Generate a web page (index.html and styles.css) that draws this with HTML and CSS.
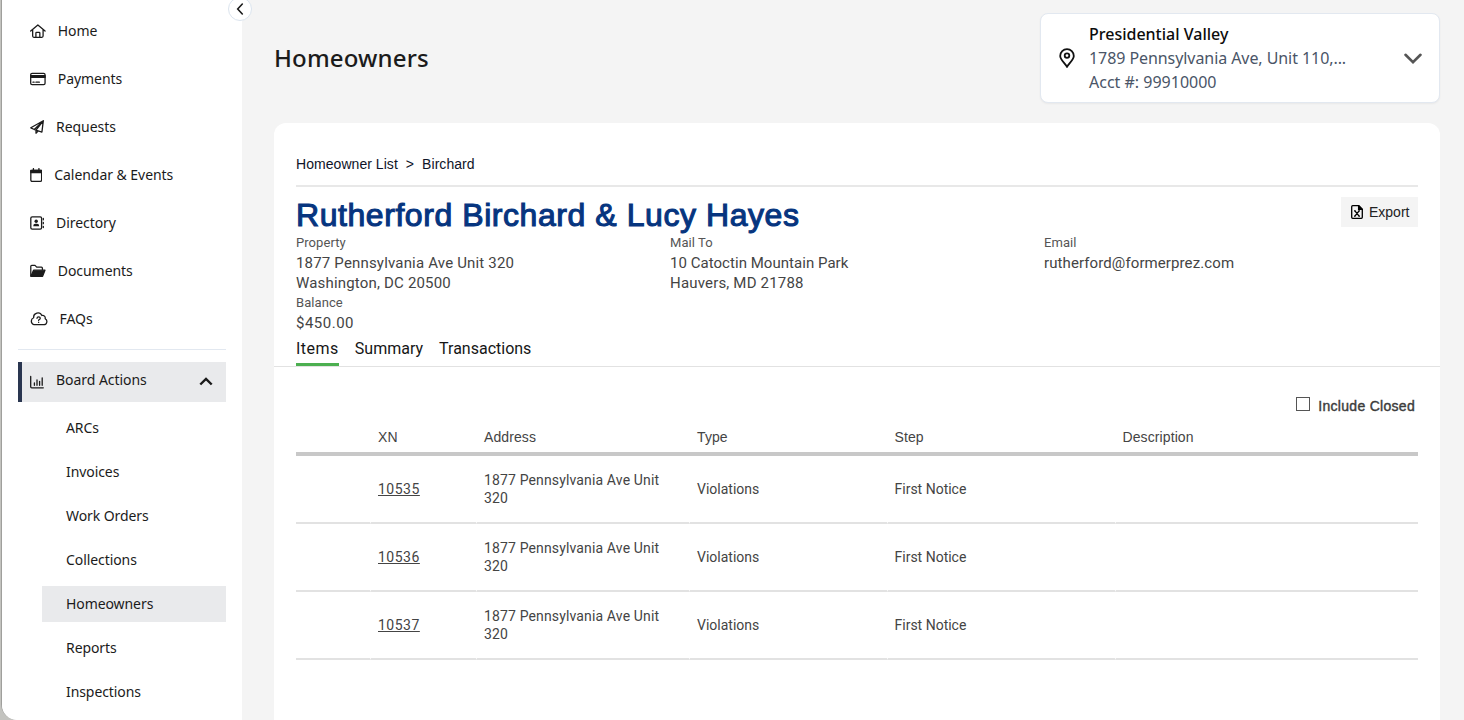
FILE: index.html
```html
<!DOCTYPE html>
<html lang="en">
<head>
    <meta charset="UTF-8">
    <meta name="viewport" content="width=device-width, initial-scale=1.0">
    <title>Homeowners</title>
    <link rel="stylesheet" href="styles.css">
</head>
<body>
    <div class="app">
        <aside class="sidebar">
            <nav class="main-nav">
                <a class="nav-item">
                    <svg class="icon w16" viewBox="0 0 16 14"><path d="M.7 7 8 .8 15.3 7M2.7 5.6v6.6q0 1.2 1.2 1.2h8.2q1.2 0 1.2-1.2V5.6M6 13.2V9q0-.7.7-.7h2.6q.7 0 .7.7v4.2"/></svg>
                    <span>Home</span>
                </a>
                <a class="nav-item">
                    <svg class="icon w16" viewBox="0 0 16 14"><rect x=".7" y="1.2" width="14.6" height="11.6" rx="1.4"/><path class="fill" d="M.7 3.600h14.6v1.800H.7z"/><path d="M3 10.2h1.2M6 10.2h3.500"/></svg>
                    <span>Payments</span>
                </a>
                <a class="nav-item">
                    <svg class="icon w14" viewBox="0 0 14 14"><path d="M13.3.8.8 7.8l3.5 1.7 7.6 2.6L13.3.8 4.3 9.5M13.3.8 6 10.1v3.1l2-2.2"/></svg>
                    <span>Requests</span>
                </a>
                <a class="nav-item">
                    <svg class="icon w12" viewBox="0 0 12 14"><rect x=".7" y="2.3" width="10.8" height="11" rx="1.2"/><path class="fill" d="M.7 2.3h10.8v2.2H.7z"/><path d="M3.3.6v2M8.8.6v2"/></svg>
                    <span>Calendar &amp; Events</span>
                </a>
                <a class="nav-item">
                    <svg class="icon w14" viewBox="0 0 14 14"><rect x=".8" y=".8" width="10.8" height="12.4" rx="1.4"/><g class="solid"><circle cx="6.2" cy="5.200" r="1.700"/><path d="M3.200 10.200q0-2.400 2.200-2.400h1.600q2.200 0 2.200 2.400z"/></g><path d="M13.300 2.500v1.300M13.300 6.400v1.300M13.300 10.300v1.300"/></svg>
                    <span>Directory</span>
                </a>
                <a class="nav-item">
                    <svg class="icon w16" viewBox="0 0 16 14"><path d="M.8 12V2.3q0-1 1-1h3.300l1.700 1.800h4.800q1 0 1 1v1.500"/><path class="fill" d="M3.600 6.200h11.600l-2.400 6.200H.9z"/></svg>
                    <span>Documents</span>
                </a>
                <a class="nav-item">
                    <svg class="icon w18" viewBox="0 0 18 14"><path d="M4.100 12.900h10a3.300 3.300 0 0 0 1.500-6.200 2.700 2.700 0 0 0-3.400-3.300 4.400 4.400 0 0 0-8.400 2.300A3.800 3.800 0 0 0 4.100 12.900z"/><path d="M7.200 6.300q.1-1.400 1.700-1.400 1.700 0 1.700 1.300 0 1-1.700 1.800v.5M8.900 10.300v.2"/></svg>
                    <span>FAQs</span>
                </a>
            </nav>

            <a class="board-toggle">
                <svg class="icon w14" viewBox="0 0 14 14"><path d="M.7 1.500v10.300q0 1 1 1h11.600M4.400 10.300V8M7 10.300V5M9.600 10.300V6.300M12.200 10.300V2.800"/></svg>
                <span class="board-label">Board Actions</span>
                <svg class="caret" viewBox="0 0 14 9"><path d="M1.300 7.500 7 2l5.700 5.500"/></svg>
            </a>
            <nav class="sub-nav">
                <a>ARCs</a>
                <a>Invoices</a>
                <a>Work Orders</a>
                <a>Collections</a>
                <a class="active">Homeowners</a>
                <a>Reports</a>
                <a>Inspections</a>
            </nav>
            <button class="collapse"><svg viewBox="0 0 8 12"><path d="M6.300 1 1.700 6l4.600 5"/></svg></button>
        </aside>

        <main class="content">
            <header class="topbar">
                <h1>Homeowners</h1>
                <div class="account">
                    <svg class="pin" viewBox="0 0 16 20"><path d="M8 18.800C6 15.400 1.200 11.500 1.200 7.900a6.800 6.800 0 0 1 13.600 0C14.800 11.500 10 15.400 8 18.800z"/><circle cx="8" cy="7.600" r="2.300"/></svg>
                    <div class="account-text">
                        <div class="account-name">Presidential Valley</div>
                        <div class="account-address">1789 Pennsylvania Ave, Unit 110,...</div>
                        <div>Acct #: 99910000</div>
                    </div>
                    <svg class="chevron" viewBox="0 0 18 11"><path d="M1.500 1.800 9 9.100l7.500-7.300"/></svg>
                </div>
            </header>

            <section class="card">
                <div class="breadcrumb"><span>Homeowner List</span><span>&gt;</span><span>Birchard</span></div>
                <div class="owner-head">
                    <h2>Rutherford Birchard &amp; Lucy Hayes</h2>
                    <button class="export">
                        <svg viewBox="0 0 12 14"><path d="M.7 1.700q0-1 1-1h6.100l3.500 3.500v8.100q0 1-1 1H1.700q-1 0-1-1z"/><path class="fold" d="M7.600.7v3.700h3.700z"/><path d="m3.900 5.800 4.200 5.400M8.100 5.800l-4.200 5.400M3 5.800h1.800M7.200 5.800H9M3 11.200h1.800M7.200 11.200H9"/></svg>
                        Export
                    </button>
                </div>
                <div class="details">
                    <div>
                        <div class="label">Property</div>
                        <div class="street">1877 Pennsylvania Ave Unit 320</div>
                        <div class="city">Washington, DC 20500</div>
                        <div class="label">Balance</div>
                        <div class="balance">$450.00</div>
                    </div>
                    <div>
                        <div class="label">Mail To</div>
                        <div class="mail">10 Catoctin Mountain Park</div>
                        <div class="city">Hauvers, MD 21788</div>
                    </div>
                    <div>
                        <div class="label">Email</div>
                        <div class="email">rutherford@formerprez.com</div>
                    </div>
                </div>
                <div class="tabs">
                    <a class="tab active">Items</a>
                    <a class="tab">Summary</a>
                    <a class="tab">Transactions</a>
                </div>

                <div class="items">
                    <label class="closed"><input type="checkbox"><span>Include Closed</span></label>
                    <table>
                        <thead>
                            <tr>
                                <th class="col-blank"></th>
                                <th class="col-xn">XN</th>
                                <th class="col-address">Address</th>
                                <th class="col-type">Type</th>
                                <th class="col-step">Step</th>
                                <th>Description</th>
                            </tr>
                        </thead>
                        <tbody>
                            <tr>
                                <td></td>
                                <td><a class="xn">10535</a></td>
                                <td class="address">1877 Pennsylvania Ave Unit 320</td>
                                <td>Violations</td>
                                <td>First Notice</td>
                                <td></td>
                            </tr>
                            <tr>
                                <td></td>
                                <td><a class="xn">10536</a></td>
                                <td class="address">1877 Pennsylvania Ave Unit 320</td>
                                <td>Violations</td>
                                <td>First Notice</td>
                                <td></td>
                            </tr>
                            <tr>
                                <td></td>
                                <td><a class="xn">10537</a></td>
                                <td class="address">1877 Pennsylvania Ave Unit 320</td>
                                <td>Violations</td>
                                <td>First Notice</td>
                                <td></td>
                            </tr>
                        </tbody>
                    </table>
                </div>
            </section>
        </main>
    </div>
</body>
</html>
```

FILE: styles.css
```css
* {
    box-sizing: border-box;
}

body {
    margin: 0;
    height: 720px;
    overflow: hidden;
    background: #c3c3bf;
    color: #1b1b1b;
    font-family: "Noto Sans", sans-serif;
    font-size: 14px;
}

.app {
    display: flex;
    height: 720px;
    margin-left: 1px;
    border-left: 1px solid #9f9f9c;
    border-bottom-left-radius: 16px;
    background: #f4f4f4;
}

/* Sidebar */
.sidebar {
    position: relative;
    flex: none;
    width: 240px;
    height: 720px;
    padding: 7px 16px 0;
    background: #fff;
    border-bottom-left-radius: 15px;
}

.main-nav {
    height: 343px;
    border-bottom: 1px solid #e2e8f0;
}

.nav-item {
    display: flex;
    align-items: center;
    gap: 12px;
    height: 48px;
    padding-left: 12px;
    letter-spacing: -0.05px;
}

.nav-item span {
    padding-bottom: 2px;
}

.icon {
    flex: none;
    height: 14px;
    fill: none;
    stroke: #1b1b1b;
    stroke-width: 1.3;
    stroke-linejoin: round;
    stroke-linecap: round;
}

.icon .fill {
    fill: #1b1b1b;
}

.icon .solid {
    fill: #1b1b1b;
    stroke: none;
}

.w12 {
    width: 12.25px;
}

.w14 {
    width: 14px;
}

.w16 {
    width: 15.75px;
}

.w18 {
    width: 17.5px;
}

.board-toggle {
    display: flex;
    align-items: center;
    height: 40px;
    margin-top: 12px;
    padding: 0 13px 0 8px;
    border-left: 4px solid #2a3650;
    background: #e9eaec;
}

.board-label {
    flex: 1;
    margin-left: 12px;
    padding-bottom: 5px;
    letter-spacing: -0.05px;
}

.caret {
    width: 14px;
    height: 9px;
    margin-bottom: 1px;
    fill: none;
    stroke: #1b1b1b;
    stroke-width: 2.4;
}

.sub-nav {
    display: flex;
    flex-direction: column;
    gap: 8px;
    margin: 8px 0 0 24px;
    letter-spacing: -0.08px;
}

.sub-nav a {
    height: 36px;
    padding-left: 24px;
    line-height: 36px;
}

.sub-nav .active {
    background: #e9eaec;
}

.collapse {
    position: absolute;
    top: -3px;
    right: -10px;
    display: flex;
    align-items: center;
    justify-content: center;
    width: 24px;
    height: 24px;
    padding: 0;
    border: 1px solid #dbe4ee;
    border-radius: 50%;
    background: #fff;
}

.collapse svg {
    width: 8px;
    height: 12px;
    fill: none;
    stroke: #1b1b1b;
    stroke-width: 1.6;
    stroke-linecap: round;
}

/* Top bar */
.content {
    flex: 1;
    padding: 13px 24px 0 32px;
}

.topbar {
    display: flex;
    align-items: center;
    justify-content: space-between;
    height: 90px;
}

h1 {
    margin: 0;
    padding-bottom: 2px;
    font-size: 24px;
    font-weight: 500;
    letter-spacing: 0.15px;
}

.account {
    display: flex;
    align-items: center;
    width: 400px;
    height: 90px;
    padding: 0 17px 0 18px;
    border: 1px solid #e2e8f0;
    border-radius: 8px;
    background: #fff;
    box-shadow: 0 1px 2px rgba(0, 0, 0, 0.05);
}

.account-text {
    flex: 1;
    margin-left: 14px;
    color: #4a5567;
    font-size: 16px;
    line-height: 24px;
}

.account-name {
    color: #0c0c0c;
    font-weight: 500;
}

.account-address {
    letter-spacing: -0.07px;
}

.pin {
    width: 16px;
    height: 20px;
    fill: none;
    stroke: #111;
    stroke-width: 1.8;
}

.chevron {
    width: 18px;
    height: 11px;
    margin-top: 1px;
    fill: none;
    stroke: #555;
    stroke-width: 2.6;
    stroke-linecap: round;
}

/* Homeowner card */
.card {
    height: 597px;
    margin-top: 20px;
    border-radius: 12px 12px 0 0;
    background: #fff;
}

.breadcrumb {
    display: flex;
    gap: 8px;
    height: 64px;
    margin: 0 22px;
    padding-top: 33px;
    border-bottom: 2px solid #e8e8e8;
    color: #0f1428;
    font: 14px/16px "Liberation Sans", Arial, sans-serif;
    letter-spacing: 0.05px;
}

.owner-head {
    display: flex;
    justify-content: space-between;
    height: 46px;
    padding: 10px 22px 0;
}

h2 {
    margin: 0;
    color: #06357f;
    font: 32px/36px "Liberation Sans", Arial, sans-serif;
    letter-spacing: 0.56px;
    -webkit-text-stroke: 1.1px #06357f;
}

.export {
    display: flex;
    align-items: center;
    gap: 6px;
    width: 77px;
    height: 30px;
    padding: 0 0 0 10px;
    border: none;
    background: #f4f4f4;
    color: #222;
    font: 14px "Liberation Sans", Arial, sans-serif;
}

.export svg {
    width: 12px;
    height: 14px;
    fill: none;
    stroke: #000;
    stroke-width: 1.3;
}

.export .fold {
    fill: #000;
}

.details {
    display: grid;
    grid-template-columns: repeat(3, 1fr);
    height: 100px;
    padding: 0 22px;
    color: #444;
    font: 15px/20px Roboto, sans-serif;
}

.label {
    color: #555;
    font-size: 13px;
    letter-spacing: 0.07px;
}

.street,
.city {
    letter-spacing: 0.18px;
}

.balance {
    letter-spacing: 0.5px;
}

.mail {
    letter-spacing: 0.04px;
}

.email {
    letter-spacing: 0.1px;
}

.tabs {
    display: flex;
    gap: 16px;
    height: 34px;
    padding: 0 22px;
    border-bottom: 1px solid #e2e2e2;
    color: #161616;
    font: 16px/31px Roboto, sans-serif;
}

.tab {
    height: 33px;
}

.tab.active {
    border-bottom: 3px solid #4caf50;
    letter-spacing: 0.5px;
}

/* Items table */
.items {
    padding: 28px 22px 0;
}

.closed {
    display: flex;
    justify-content: flex-end;
    gap: 8px;
    height: 27px;
    padding-right: 3px;
    color: #3c3c3c;
    font: 14px/22px "Liberation Sans", Arial, sans-serif;
    letter-spacing: 0.29px;
    -webkit-text-stroke: 0.4px #3c3c3c;
}

.closed input {
    appearance: none;
    width: 14px;
    height: 14px;
    margin: 2px 0 0;
    border: 1px solid #555;
    background: #fff;
}

table {
    width: 1122px;
    table-layout: fixed;
    border-collapse: separate;
    border-spacing: 0;
    color: #444;
    font: 14px/18px Roboto, sans-serif;
}

th {
    height: 34px;
    padding: 0 8px;
    border-bottom: 4px solid #c8c8c8;
    font: 14px/16px "Liberation Sans", Arial, sans-serif;
    letter-spacing: 0.1px;
    text-align: left;
}

td {
    height: 68px;
    padding: 0 8px;
    border-bottom: 2px solid #e2e2e2;
}

td + td {
    border-left: 1px solid #fff;
    padding-left: 7px;
}

.col-blank {
    width: 74px;
}

.col-xn {
    width: 106px;
}

.col-address {
    width: 213px;
}

.col-type {
    width: 197.5px;
}

.col-step {
    width: 228px;
}

.address {
    letter-spacing: 0.14px;
}

.xn {
    letter-spacing: 0.5px;
    text-decoration: underline;
}
```
